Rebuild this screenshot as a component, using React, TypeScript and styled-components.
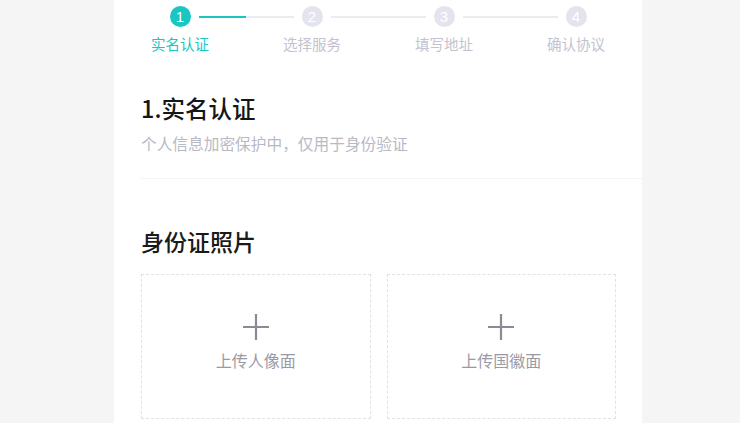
import styled, { createGlobalStyle } from "styled-components";

const GlobalStyle = createGlobalStyle`
  body {
    margin: 0;
    background: #f5f5f6;
    font-family: "Noto Sans CJK SC", "Noto Sans", sans-serif;
  }
`;

const steps = ["实名认证", "选择服务", "填写地址", "确认协议"];
const current = 0;

type Tone = "active" | "idle" | "none";

const App = () => {
  return (
    <>
      <GlobalStyle />
      <Panel>
        <Steps>
          {steps.map((label, i) => {
            const left: Tone = i === 0 ? "none" : i <= current ? "active" : "idle";
            const right: Tone =
              i === steps.length - 1 ? "none" : i <= current ? "active" : "idle";
            return (
              <Step key={label}>
                <StepRow>
                  <Segment $tone={left} $side="left" />
                  <Dot $active={i <= current}>{i + 1}</Dot>
                  <Segment $tone={right} $side="right" />
                </StepRow>
                <StepLabel $active={i <= current}>{label}</StepLabel>
              </Step>
            );
          })}
        </Steps>

        <Intro>
          <Title>1.实名认证</Title>
          <Hint>个人信息加密保护中，仅用于身份验证</Hint>
        </Intro>

        <Section>
          <SectionTitle>身份证照片</SectionTitle>
          <UploadGrid>
            <UploadBox>
              <PlusIcon />
              <UploadText>上传人像面</UploadText>
            </UploadBox>
            <UploadBox>
              <PlusIcon />
              <UploadText>上传国徽面</UploadText>
            </UploadBox>
          </UploadGrid>
        </Section>
      </Panel>
    </>
  );
};

const PlusIcon = () => (
  <svg width="26" height="26" viewBox="0 0 26 26">
    <path d="M13 0v26M0 13h26" stroke="#8b8b98" strokeWidth="2.2" fill="none" />
  </svg>
);

export default App;

const Panel = styled.div`
  width: 528px;
  min-height: 423px;
  margin-left: 114px;
  background: #fff;
`;

const Steps = styled.div`
  display: grid;
  grid-template-columns: repeat(4, 1fr);
  padding-top: 6px;
`;

const Step = styled.div`
  display: flex;
  flex-direction: column;
  align-items: center;
`;

const StepRow = styled.div`
  display: flex;
  align-items: center;
  width: 100%;
`;

const Segment = styled.div<{ $tone: Tone; $side: "left" | "right" }>`
  flex: 1;
  height: 2px;
  ${(p) => (p.$side === "left" ? "margin-right: 8px;" : "margin-left: 8px;")}
  background: ${(p) =>
    p.$tone === "active" ? "#1ac6c2" : p.$tone === "idle" ? "#ebebf2" : "transparent"};
`;

const Dot = styled.div<{ $active: boolean }>`
  width: 21px;
  height: 21px;
  border-radius: 50%;
  display: flex;
  align-items: center;
  justify-content: center;
  background: ${(p) => (p.$active ? "#1ac6c2" : "#e4e4ee")};
  color: #fff;
  font-family: "Liberation Sans", sans-serif;
  font-size: 15px;
  font-weight: 400;
`;

const StepLabel = styled.div<{ $active: boolean }>`
  margin-top: 7px;
  font-size: 14.5px;
  line-height: 20px;
  color: ${(p) => (p.$active ? "#1ac6c2" : "#c3c3cf")};
`;

const Intro = styled.div`
  margin: 38px 0 0 27px;
  padding-bottom: 23px;
  border-bottom: 1px solid #f4f4f7;
`;

const Title = styled.h1`
  margin: 0;
  font-size: 23.5px;
  line-height: 32px;
  font-weight: 500;
  color: #161616;
`;

const Hint = styled.p`
  margin: 9px 0 0;
  font-size: 15.7px;
  line-height: 22px;
  color: #b9b9c6;
`;

const Section = styled.div`
  padding: 46px 26px 0 27px;
`;

const SectionTitle = styled.h2`
  margin: 0;
  font-size: 23px;
  line-height: 32px;
  font-weight: 500;
  color: #1a1a1a;
`;

const UploadGrid = styled.div`
  display: grid;
  grid-template-columns: 1fr 1fr;
  gap: 16px;
  margin-top: 17px;
`;

const UploadBox = styled.div`
  height: 145px;
  box-sizing: border-box;
  border: 1px dashed #e2e2e6;
  display: flex;
  flex-direction: column;
  align-items: center;
  padding-top: 39px;
  gap: 9px;
`;

const UploadText = styled.div`
  font-size: 16px;
  line-height: 22px;
  color: #9a9aa6;
`;
